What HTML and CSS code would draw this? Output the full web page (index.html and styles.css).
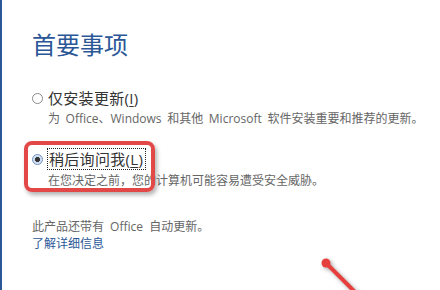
FILE: index.html
```html
<!DOCTYPE HTML>
<html>
  <head>
    <meta http-equiv="Content-Type" content="text/html; charset=utf-8" />
    <link rel="stylesheet" href="styles.css">
  </head>
  <body>
    <div class="page">
      <h1 class="title">首要事项</h1>

      <div class="option first">
        <div class="label"><span class="radio"></span>仅安装更新(<u>I</u>)</div>
        <div class="desc">为 Office、Windows 和其他 Microsoft 软件安装重要和推荐的更新。</div>
      </div>

      <div class="option second">
        <div class="label"><span class="radio checked"></span><span class="focus">稍后询问我(<u>L</u>)</span></div>
        <div class="desc">在您决定之前，您的计算机可能容易遭受安全威胁。</div>
      </div>

      <div class="note">
        <div>此产品还带有 Office 自动更新。</div>
        <a class="more" href="#">了解详细信息</a>
      </div>

      <!-- annotations drawn over the dialog -->
      <div class="mark"></div>
      <svg class="arrow" width="140" height="60" viewBox="0 0 140 60">
        <line x1="26" y1="23" x2="70" y2="67" stroke="#e6403e" stroke-width="4" stroke-linecap="round" />
        <circle cx="26" cy="23" r="4.5" fill="#e6403e" />
      </svg>
    </div>
  </body>
</html>
```

FILE: styles.css
```css
body        { margin: 0; background: #fff; font-family: "Open Sans", "Noto Sans CJK SC", sans-serif; overflow: hidden; }
.page       { position: relative; height: 290px; box-sizing: border-box; border-left: 2px solid #2b5797; padding: 30px 0 0 30px; }
.title      { margin: 0; font-size: 24px; line-height: 30px; font-weight: normal; color: #2b5797; }

.option         { margin-top: 28px; }
.option.second  { margin-top: 21px; }
.label          { display: flex; align-items: center; font-size: 15px; line-height: 20px; color: #333; letter-spacing: 0.3px; }
.label u        { text-decoration: underline; text-underline-offset: 2px; }
.desc           { margin: 3px 0 0 16px; font-size: 12px; line-height: 16px; color: #666; white-space: nowrap; word-spacing: 2.5px; }

.radio          { width: 11px; height: 11px; box-sizing: border-box; border: 1px solid #8a8a8a; border-radius: 50%; margin-right: 5px; background: #fff; flex: none; }
.radio.checked  { border-color: #6d8fc0; background: radial-gradient(circle, #333 0 2.2px, #c9d8ee 2.8px, #eef3fa 100%); }
.focus          { border: 1px dotted #222; padding: 0 2px 0 1px; margin-left: -1px; }

.note           { margin-top: 29px; font-size: 12px; line-height: 17px; color: #666; word-spacing: 3px; }
.more           { color: #2b5797; text-decoration: none; }

.mark   { position: absolute; left: 22px; top: 141px; width: 131px; height: 51px; box-sizing: border-box; border: 4px solid #e34848; border-radius: 8px; box-shadow: 2px 3px 4px rgba(0, 0, 0, 0.3); }
.arrow  { position: absolute; left: 298px; top: 240px; filter: drop-shadow(2px 2px 2px rgba(0, 0, 0, 0.35)); }
```
